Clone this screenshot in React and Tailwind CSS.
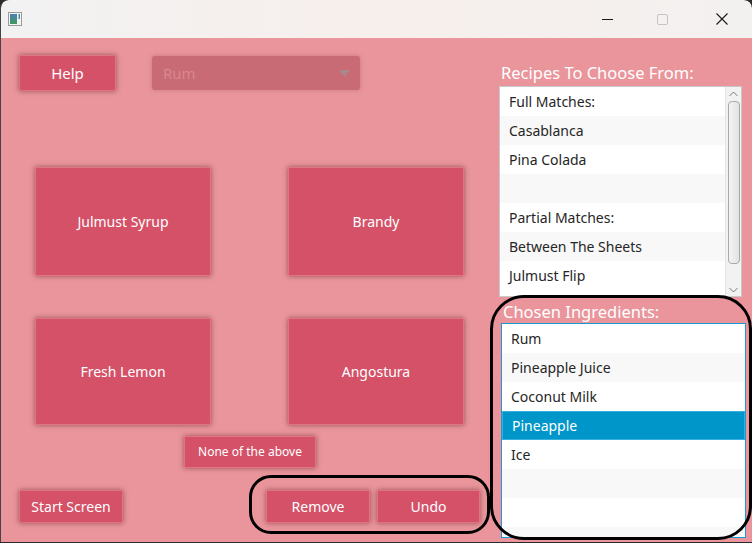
import React from "react";

const FONT = { fontFamily: '"Noto Sans", "Open Sans", sans-serif' };

const recipes = [
  "Full Matches:",
  "Casablanca",
  "Pina Colada",
  "",
  "Partial Matches:",
  "Between The Sheets",
  "Julmust Flip",
];

const chosen = ["Rum", "Pineapple Juice", "Coconut Milk", "Pineapple", "Ice", "", "", ""];

function PinkButton({ children, className = "" }) {
  return (
    <div
      className={`flex items-center justify-center bg-[#d45167] text-white border border-[#e07484] shadow-[0_0_5px_rgba(80,20,30,0.55)] ${className}`}
    >
      {children}
    </div>
  );
}

function TitleBar() {
  return (
    <div className="h-[38px] flex items-center bg-gradient-to-r from-[#f2f2f2] via-[#f7efec] to-[#f3f1f0] rounded-t-[8px]">
      <svg width="14" height="14" viewBox="0 0 14 14" className="ml-[7px]">
        <defs>
          <linearGradient id="ic" x1="0" y1="0" x2="0" y2="1">
            <stop offset="0" stopColor="#4f7fb8" />
            <stop offset="1" stopColor="#3f9a5a" />
          </linearGradient>
        </defs>
        <rect x="0.5" y="0.5" width="13" height="13" fill="#f4f4f4" stroke="#9a9a9a" />
        <rect x="2" y="2" width="7" height="10" fill="url(#ic)" />
        <rect x="10.5" y="2" width="1.5" height="5" fill="#3f8fa8" />
      </svg>
      <div className="flex-1" />
      <div className="w-[46px] flex justify-center">
        <div className="w-[11px] h-px bg-[#1a1a1a]" />
      </div>
      <div className="w-[64px] flex justify-center">
        <div className="w-[11px] h-[11px] border border-[#c4c4c4] rounded-[2px]" />
      </div>
      <div className="w-[58px] flex justify-center pr-[2px]">
        <svg width="12" height="12" viewBox="0 0 12 12">
          <path d="M0.5 0.5 L11.5 11.5 M11.5 0.5 L0.5 11.5" stroke="#1a1a1a" strokeWidth="1.1" />
        </svg>
      </div>
    </div>
  );
}

function LeftPanel() {
  return (
    <div className="w-[489px] flex flex-col pt-[17px]">
      <div className="flex items-center">
        <PinkButton className="ml-[18px] w-[97px] h-[36px] text-[15px]">Help</PinkButton>
        <div className="ml-[36px] w-[208px] h-[34px] rounded-[3px] bg-[#c86b75] shadow-[0_0_4px_rgba(150,60,70,0.35)] flex items-center pl-[11px] pr-[10px]">
          <span className="text-[15px] text-[#d8868f] flex-1">Rum</span>
          <svg width="11" height="7" viewBox="0 0 11 7">
            <path d="M0 0 L11 0 L5.5 7 Z" fill="#a9878b" />
          </svg>
        </div>
      </div>
      <div className="mt-[76px] ml-[34px] grid grid-cols-[176px_176px] gap-x-[77px] gap-y-[42px]">
        <PinkButton className="h-[109px] text-[14px]">Julmust Syrup</PinkButton>
        <PinkButton className="h-[109px] text-[14px]">Brandy</PinkButton>
        <PinkButton className="h-[107px] text-[14px]">Fresh Lemon</PinkButton>
        <PinkButton className="h-[107px] text-[14px]">Angostura</PinkButton>
      </div>
      <div className="mt-[11px] ml-[183px]">
        <PinkButton className="w-[132px] h-[32px] text-[12px]">None of the above</PinkButton>
      </div>
      <div className="mt-[22px] flex items-center">
        <PinkButton className="ml-[18px] w-[104px] h-[33px] text-[14px]">Start Screen</PinkButton>
        <div className="relative ml-[143px] flex gap-[7px]">
          <PinkButton className="w-[104px] h-[33px] text-[14px]">Remove</PinkButton>
          <PinkButton className="w-[103px] h-[33px] text-[14px]">Undo</PinkButton>
          <div className="absolute left-[-17px] top-[-15px] w-[241px] h-[59px] border-[3px] border-black rounded-[22px] pointer-events-none" />
        </div>
      </div>
    </div>
  );
}

function RightPanel() {
  return (
    <div className="flex-1 flex flex-col pt-[23px] pr-[5px]">
      <div className="ml-[11px] text-[16.5px] leading-[24px] text-white">Recipes To Choose From:</div>
      <div className="ml-[9px] mt-px w-[243px] h-[211px] bg-white border border-[#c8c8c8] flex">
        <div className="flex-1 flex flex-col">
          {recipes.map((r, i) => (
            <div
              key={i}
              className={`h-[29px] flex items-center pl-[9px] text-[14px] text-[#262626] ${i % 2 === 1 ? "bg-[#f8f8f8]" : "bg-white"}`}
            >
              {r}
            </div>
          ))}
        </div>
        <div className="w-[16px] bg-[#f2f2f2] border-l border-[#e4e4e4] flex flex-col items-center">
          <svg width="9" height="6" viewBox="0 0 9 6" className="mt-[4px]">
            <path d="M0.5 5 L4.5 1 L8.5 5" fill="none" stroke="#7a7a7a" strokeWidth="1" />
          </svg>
          <div className="mt-[4px] w-[12px] h-[163px] rounded-[4px] border border-[#a8a8a8] bg-gradient-to-r from-[#f4f4f4] to-[#e2e2e2]" />
          <div className="flex-1" />
          <svg width="9" height="6" viewBox="0 0 9 6" className="mb-[3px]">
            <path d="M0.5 1 L4.5 5 L8.5 1" fill="none" stroke="#7a7a7a" strokeWidth="1" />
          </svg>
        </div>
      </div>
      <div className="relative mt-[3px]">
        <div className="ml-[13px] text-[16.5px] leading-[23px] text-white">Chosen Ingredients:</div>
        <div className="ml-[11px] w-[245px] h-[215px] bg-white border border-[#1a9ad0] flex flex-col overflow-hidden">
          {chosen.map((c, i) => (
            <div
              key={i}
              className={`h-[29px] shrink-0 flex items-center pl-[9px] text-[14px] ${
                i === 3
                  ? "bg-[#0096c9] text-white border border-[#35aee0]"
                  : i % 2 === 1
                  ? "bg-[#f8f8f8] text-[#262626]"
                  : "bg-white text-[#262626]"
              }`}
            >
              {c}
            </div>
          ))}
        </div>
        <div className="absolute left-0 top-[-5px] w-[262px] h-[245px] border-[3px] border-black rounded-[34px] pointer-events-none" />
      </div>
    </div>
  );
}

export default function App() {
  return (
    <div className="w-[752px] h-[543px] bg-[#2b2b2b] overflow-hidden" style={FONT}>
      <div className="w-[752px] h-[542px] flex flex-col rounded-t-[8px] border-l border-[#444] overflow-hidden">
        <TitleBar />
        <div className="flex-1 flex bg-[#e9959b]">
          <LeftPanel />
          <RightPanel />
        </div>
      </div>
    </div>
  );
}
